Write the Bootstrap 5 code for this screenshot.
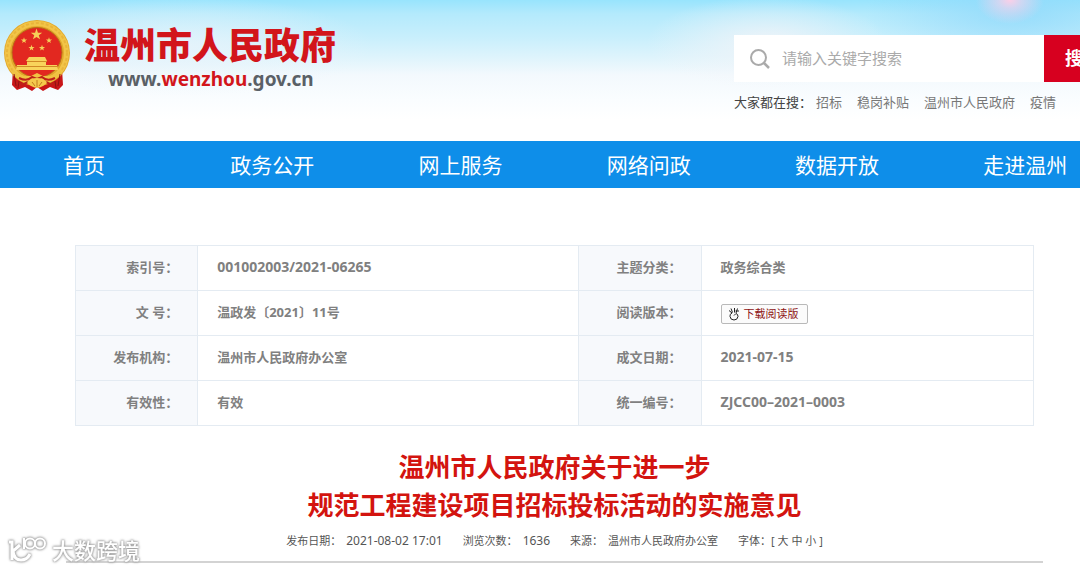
<!DOCTYPE html>
<html lang="zh-CN">
<head>
<meta charset="utf-8">
<meta name="viewport" content="width=device-width, initial-scale=1">
<title>温州市人民政府</title>
<link href="https://cdn.jsdelivr.net/npm/bootstrap@5.3.0/dist/css/bootstrap.min.css" rel="stylesheet">
<style>
body{font-family:"Noto Sans","Noto Sans CJK SC",sans-serif;font-size:13px;color:#333;background:#fff;overflow-x:hidden}
a{color:inherit;text-decoration:none}
.site-head{height:141px;background:
 radial-gradient(ellipse 34px 24px at 93.5% 0,#fbcfe8 0,#f6d3ec99 35%,#f9d3ea00 100%),
 radial-gradient(ellipse 150px 60px at 94% 12px,#8fd9fbcc 0,#a4e2fc00 100%),
 radial-gradient(ellipse 120px 46px at 71% 42px,#f3f4f8dd 0,#f3f5f900 100%),
 radial-gradient(ellipse 190px 50px at 17% 46px,#e9f4fbcc 0,#e9f4fb00 100%),
 linear-gradient(180deg,#98e4fd 0,#b4eafc 14px,#c9effc 38px,#dff4fc 58px,#f3f9fd 75px,#fafdff 100px,#fff 120px)}
.emblem{width:68px;height:72px}
.brand-name{font-size:36px;line-height:44px;font-weight:900;color:#d2151b}
.brand-url{font-size:19px;line-height:22px;font-weight:700;color:#5a6066}
.brand-url span{color:#d2151b}
.finder{width:408px;margin-right:-62px;padding-top:35px}
.finder-bar{height:47px}
.finder-box{width:310px}
.finder-box input{font-size:15px;color:#555}
.finder-box input::placeholder{color:#aaa;opacity:1}
.finder-btn{width:98px;background:#d7001f;color:#fff;font-size:18px;font-weight:700;line-height:47px;padding:0 21px}
.hot{font-size:13px;line-height:20px;color:#777;gap:15px;margin-top:10px}
.hot b{font-weight:400;color:#444;margin-right:-11px}
.main-menu{background:#0e8ee9;height:47px}
.main-menu ul{margin-left:-10px;width:105%}
.main-menu li{flex:0 0 16.6%}
.main-menu a{color:#fff;font-size:21px;line-height:48px;display:block}
.doc{padding:57px 37px 0 66px}
.doc-info{margin:0 9px}
.doc-info table{width:100%;table-layout:fixed;border-collapse:collapse;color:#808080;font-weight:700}
.doc-info th,.doc-info td{height:45px;border:1px solid #e4ebf2;padding:0 19px 2px;vertical-align:middle;line-height:20px}
.doc-info th{background:#f7f9fc;text-align:right}
.digits{font-size:14px}
.col-label{width:12.75%}.col-wide{width:39.8%}
.dl-btn{height:20px;font-size:11px;line-height:16px;color:#8e1414;background:#fbfbfb;border:1px solid #b9b9b9;border-radius:2px;padding:0 8px 0 6px}
.doc-title{font-size:26px;line-height:38px;font-weight:700;color:#d3140f;margin-top:22px}
.doc-meta{font-size:11px;line-height:20px;color:#555;gap:20px;margin-top:7px}
.doc-meta .num{font-size:12px}
.doc-meta .lb{margin-right:5px}
.doc-meta button{border:0;background:none;padding:0;color:inherit}
.doc-rule{height:2px;background:#d3d3d3;margin-top:10px}
.stamp{position:absolute;left:8px;top:533px;color:#fff;filter:drop-shadow(0 0 1px #999) drop-shadow(0 0 1px #aaa);font-size:22px;line-height:34px;font-weight:500}
</style>
</head>
<body>
<header class="site-head d-flex justify-content-between overflow-hidden">
 <a href="#" class="d-flex ps-1 pt-3">
  <svg class="emblem mt-1 flex-shrink-0" viewBox="0 0 68 72" aria-hidden="true">
   <defs><path id="star" d="M0-10 2.4-3.1 9.5-3.1 3.8 1.2 5.9 8.1 0 4-5.9 8.1-3.8 1.2-9.5-3.1-2.4-3.1Z"/></defs>
   <path d="M9 49 8 65l5 5 8-3 7 4 5-4 6 4 7-4 8 3 5-5-1-16z" fill="#c91518"/>
   <circle cx="33" cy="33" r="33" fill="#e3a92c"/>
   <circle cx="33" cy="33" r="29.500" fill="none" stroke="#f2c548" stroke-width="5"/>
   <circle cx="33" cy="33" r="30" fill="none" stroke="#e9b53a" stroke-width="2" stroke-dasharray="3 2"/>
   <circle cx="33" cy="32.500" r="25" fill="#e22820" stroke="#b96c17"/>
   <g fill="#f6d058"><use href="#star" transform="translate(32.500 14.500) scale(.6)"/><use href="#star" transform="translate(20 20.500) scale(.32)"/><use href="#star" transform="translate(45 20.500) scale(.32)"/><use href="#star" transform="translate(27.500 28) scale(.32)"/><use href="#star" transform="translate(38 28) scale(.32)"/></g>
   <path d="M25 37h16l2 4H22zM23 42h19v3h11l1 5H12l1-5h10z" fill="#f8d35b"/>
   <path d="M23 41.500h20M13 46.500h40" stroke="#d08a25" fill="none"/>
   <path d="M8 49q8 8 19 7l6-3 6 3q11 1 19-7-3 12-15 12l-10-2-10 2Q11 61 8 49z" fill="#f0c242"/>
   <path d="M15 58q8 4 13-1l5 2 5-2q5 5 13 1M12 63l8 1 6-3M54 63l-8 1-6-3" stroke="#bd2018" stroke-width="2" fill="none"/>
   <path d="M23 62q4-4 10-4t10 4q-3 5-10 6-7-1-10-6z" fill="#f4c94c"/>
   <path d="m28 62 3 4M33 60v7M38 62l-3 4" stroke="#c17b1e" fill="none"/>
   <path d="m10 54 2 12M15 61l-1 7M56 54l-2 12M51 61l1 7" stroke="#8e1013" fill="none"/>
  </svg>
  <span class="ms-2 ps-1 mt-2 text-nowrap">
   <span class="brand-name d-block">温州市人民政府</span>
   <span class="brand-url d-block ms-4">www.<span>wenzhou</span>.gov.cn</span>
  </span>
 </a>
 <form class="finder flex-shrink-0" onsubmit="return false">
  <div class="finder-bar d-flex">
   <div class="finder-box bg-white d-flex align-items-center">
    <label for="kw" class="ms-3 d-flex" aria-label="搜索"><svg width="20" height="20" viewBox="0 0 20 20" fill="none" stroke="#aaa" stroke-width="2"><circle cx="8.500" cy="8.500" r="7.500"/><path d="m14 14 5 5" stroke-width="2.500"/></svg></label>
    <input id="kw" type="text" class="form-control border-0 shadow-none bg-transparent" placeholder="请输入关键字搜索">
   </div>
   <button class="finder-btn border-0 rounded-0 text-start text-nowrap">搜索</button>
  </div>
  <div class="hot d-flex text-nowrap"><b>大家都在搜：</b><a href="#">招标</a><a href="#">稳岗补贴</a><a href="#">温州市人民政府</a><a href="#">疫情</a></div>
 </form>
</header>
<nav class="main-menu overflow-hidden">
 <ul class="list-unstyled d-flex mb-0 text-center">
  <li><a href="#">首页</a></li><li><a href="#">政务公开</a></li><li><a href="#">网上服务</a></li><li><a href="#">网络问政</a></li><li><a href="#">数据开放</a></li><li><a href="#">走进温州</a></li>
 </ul>
</nav>
<main class="doc">
 <div class="doc-info">
  <table>
   <colgroup><col class="col-label"><col class="col-wide"><col class="col-label"><col></colgroup>
   <tr><th scope="row">索引号：</th><td class="digits">001002003/2021-06265</td><th scope="row">主题分类：</th><td>政务综合类</td></tr>
   <tr><th scope="row">文 号：</th><td>温政发〔2021〕11号</td><th scope="row">阅读版本：</th><td><button class="dl-btn d-inline-flex align-items-center align-middle mt-1"><svg class="me-1" width="12" height="14" viewBox="0 0 12 14" fill="none" stroke="#222"><path d="M4 6Q1.500 7 2 9.500 2.500 13 6 13t4-3.500Q10 7 8 6.500L6 8.500M4 6 1 3.500M4.500 5.500 3 1.500M6.500 5.500V1M8 6 9.500 1.500M7.500 4H11"/></svg>下载阅读版</button></td></tr>
   <tr><th scope="row">发布机构：</th><td>温州市人民政府办公室</td><th scope="row">成文日期：</th><td class="digits">2021-07-15</td></tr>
   <tr><th scope="row">有效性：</th><td>有效</td><th scope="row">统一编号：</th><td class="digits">ZJCC00–2021–0003</td></tr>
  </table>
 </div>
 <h1 class="doc-title text-center mb-0">温州市人民政府关于进一步<br>规范工程建设项目招标投标活动的实施意见</h1>
 <div class="doc-meta d-flex justify-content-center">
  <span><span class="lb">发布日期：</span><span class="num">2021-08-02 17:01</span></span>
  <span><span class="lb">浏览次数：</span><span class="num">1636</span></span>
  <span><span class="lb">来源：</span>温州市人民政府办公室</span>
  <span>字体：[ <button>大</button> <button>中</button> <button>小</button> ]</span>
 </div>
 <div class="doc-rule"></div>
</main>
<div class="stamp d-flex align-items-center">
 <svg class="me-1" width="40" height="28" viewBox="0 0 40 28" fill="none" stroke="#fff" stroke-width="3"><path d="M1 6h3v18M12 9 5 15q1 9 8 9 6 0 9-6"/><path d="M16 2v11" stroke-width="2"/><circle cx="22" cy="7.500" r="5" stroke-width="2"/><circle cx="32" cy="7.500" r="5" stroke-width="2"/></svg>大数跨境
</div>
<script src="https://cdn.jsdelivr.net/npm/bootstrap@5.3.0/dist/js/bootstrap.bundle.min.js"></script>
</body>
</html>
